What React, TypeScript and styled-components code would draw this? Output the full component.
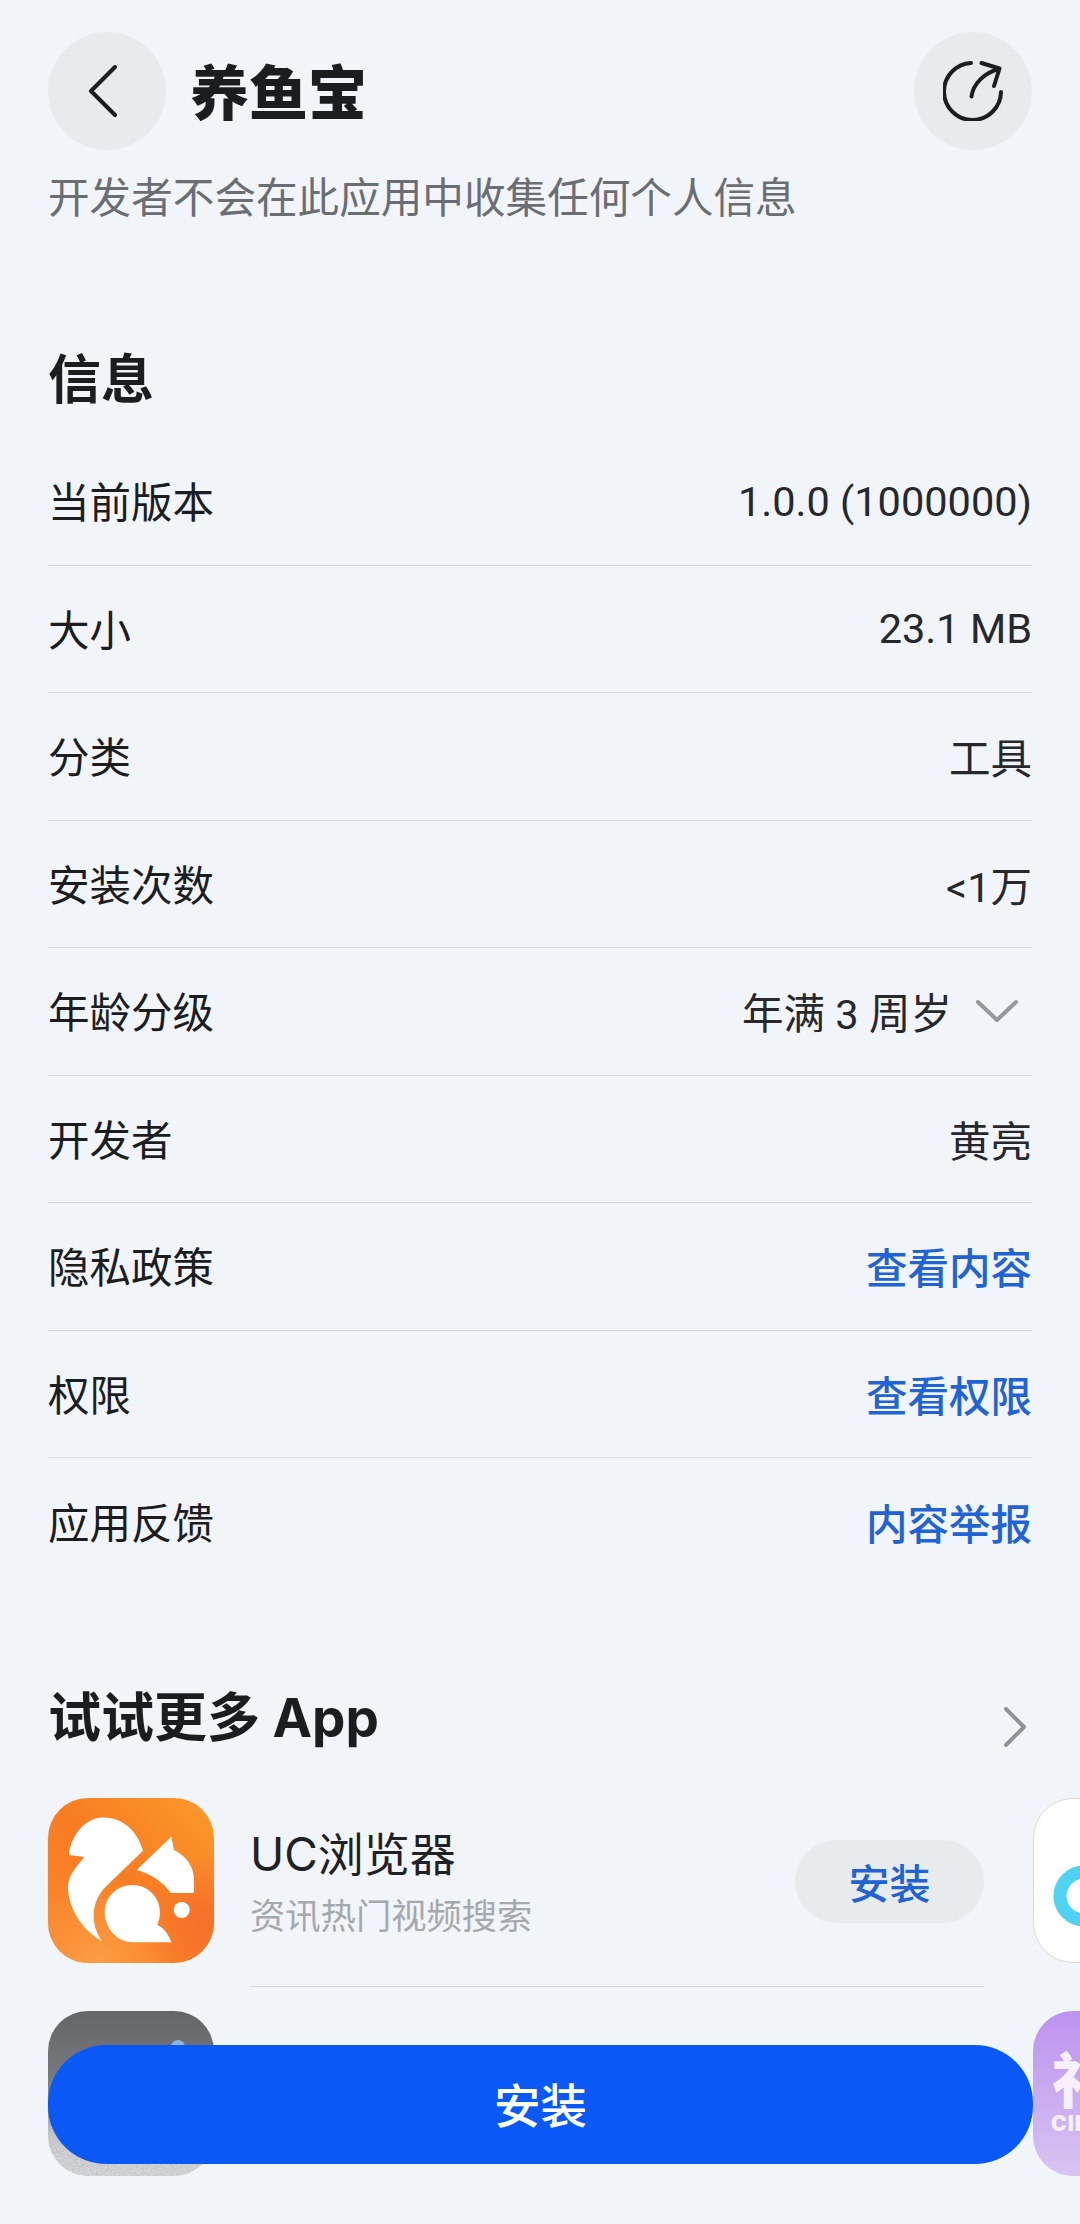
import React from 'react'
import styled, { createGlobalStyle } from 'styled-components'

const infoRows = [
  { label: '当前版本', value: '1.0.0 (1000000)' },
  { label: '大小', value: '23.1 MB' },
  { label: '分类', value: '工具' },
  { label: '安装次数', value: '<1万' },
  { label: '年龄分级', value: '年满 3 周岁', expandable: true },
  { label: '开发者', value: '黄亮' },
  { label: '隐私政策', value: '查看内容', link: true },
  { label: '权限', value: '查看权限', link: true },
  { label: '应用反馈', value: '内容举报', link: true },
]

const GlobalStyle = createGlobalStyle`
  html, body {
    margin: 0;
    padding: 0;
    background: #f1f4f9;
  }
  body {
    font-family: "Inter", "Noto Sans CJK SC", sans-serif;
  }
`

const Page = styled.div`
  position: relative;
  width: 1080px;
  height: 2224px;
  overflow: hidden;
  background: #f1f4f9;
  color: #1c1d1f;
`

const Header = styled.header`
  display: flex;
  align-items: center;
  justify-content: space-between;
  padding: 32px 48px 0;
`

const HeaderLeft = styled.div`
  display: flex;
  align-items: center;
  gap: 24px;
`

const RoundButton = styled.div`
  display: flex;
  align-items: center;
  justify-content: center;
  width: 118px;
  height: 118px;
  border-radius: 50%;
  background: #e8ebee;
`

const Title = styled.h1`
  margin: 5px 0 0;
  font-size: 59px;
  line-height: 70px;
  font-weight: 900;
`

const Subtitle = styled.p`
  margin: 23px 48px 0;
  font-size: 41.6px;
  line-height: 50px;
  color: #6a6e73;
`

const SectionTitle = styled.h2`
  margin: 0;
  font-size: 53px;
  line-height: 60px;
  font-weight: 700;
`

const Section = styled.section<{ $top: number }>`
  margin-top: ${(p) => p.$top}px;
  padding: 0 48px;
`

const InfoList = styled.div`
  margin-top: 28px;
`

const InfoRow = styled.div`
  display: flex;
  align-items: center;
  justify-content: space-between;
  height: 127.5px;
  box-sizing: border-box;
  padding-bottom: 2px;
  font-size: 41.5px;
  border-bottom: 1.5px solid #d9dcdf;
  &:last-child {
    border-bottom: none;
  }
`

const InfoValue = styled.span<{ $link?: boolean }>`
  display: flex;
  align-items: center;
  gap: 24px;
  padding-top: 2px;
  font-family: "Roboto", "Noto Sans CJK SC", sans-serif;
  font-size: 41.5px;
  color: ${(p) => (p.$link ? '#1f63d4' : '#26282b')};
  font-weight: ${(p) => (p.$link ? 500 : 400)};
`

const MoreHeader = styled.div`
  display: flex;
  align-items: center;
  justify-content: space-between;
  padding-right: 6px;
  svg {
    margin-top: 18px;
  }
`

const Carousel = styled.div`
  display: flex;
  gap: 49px;
  margin-top: 50px;
  padding-left: 48px;
`

const Column = styled.div`
  flex: none;
  width: 936px;
  display: flex;
  flex-direction: column;
  gap: 24px;
`

const AppItem = styled.div`
  display: flex;
  gap: 36px;
  min-height: 189px;
`

const IconTile = styled.div`
  flex: none;
  width: 166px;
  height: 165px;
  border-radius: 40px;
  overflow: hidden;
  svg {
    display: block;
  }
`

const AppBody = styled.div`
  flex: 1;
  display: flex;
  align-items: center;
  justify-content: space-between;
  height: 189px;
  box-sizing: border-box;
  padding-bottom: 24px;
  border-bottom: 1.5px solid #d9dcdf;
`

const AppText = styled.div`
  padding-top: 6px;
`

const AppName = styled.div`
  font-size: 46px;
  line-height: 58px;
  color: #1f2124;
`

const AppDesc = styled.div`
  font-size: 35.3px;
  line-height: 46px;
  margin-top: 11px;
  color: #a5a9ae;
`

const GetButton = styled.div`
  display: flex;
  align-items: center;
  justify-content: center;
  width: 189px;
  height: 83px;
  margin-top: 3px;
  border-radius: 42px;
  background: #e8ebee;
  color: #1f63d4;
  font-size: 41px;
  font-weight: 500;
`

const WhiteTile = styled(IconTile)`
  width: 200px;
  background: #fff;
  box-sizing: border-box;
  border: 1.5px solid #d8dadd;
`

const PurpleTile = styled(IconTile)`
  width: 200px;
  display: flex;
  flex-direction: column;
  align-items: flex-start;
  padding-left: 18px;
  box-sizing: border-box;
  background: linear-gradient(180deg, #bc92ef 0%, #d8c4f1 100%);
  color: #f6effc;
  font-weight: 900;
`

const TileGlyph = styled.span`
  font-size: 60px;
  line-height: 60px;
  margin-top: 40px;
`

const TileCaption = styled.span`
  font-family: "Inter", sans-serif;
  font-size: 21px;
  line-height: 25px;
  letter-spacing: 1px;
`

const InstallBar = styled.button`
  position: absolute;
  left: 48px;
  top: 2045px;
  width: 985px;
  height: 119px;
  padding: 0 0 5px;
  border: none;
  border-radius: 58px;
  background: #0a59f7;
  color: #fff;
  font-family: inherit;
  font-size: 46.5px;
  font-weight: 500;
`

const BackIcon = () => (
  <svg width="30" height="52" viewBox="0 0 30 52" fill="none" style={{ marginLeft: -8 }}>
    <path d="M27 2 L3 26 L27 50" stroke="#1c1d1f" strokeWidth="4" strokeLinecap="round" strokeLinejoin="round" />
  </svg>
)

const ShareIcon = () => (
  <svg width="60" height="60" viewBox="0 0 60 60" fill="none">
    <path d="M28 2 A28.5 28.5 0 1 0 58 31" stroke="#1c1d1f" strokeWidth="4" strokeLinecap="round" />
    <path d="M28.5 35.5 C30 23 41 12 55.5 8" stroke="#1c1d1f" strokeWidth="4" strokeLinecap="round" />
    <path d="M38.5 2 L56.5 7.5 L51 25" stroke="#1c1d1f" strokeWidth="4" strokeLinecap="round" strokeLinejoin="round" />
  </svg>
)

const ChevronDown = () => (
  <svg width="42" height="24" viewBox="0 0 42 24" fill="none" style={{ marginRight: 14 }}>
    <path d="M2 3 L21 21 L40 3" stroke="#95989c" strokeWidth="4" strokeLinecap="round" strokeLinejoin="round" />
  </svg>
)

const ChevronRight = () => (
  <svg width="22" height="40" viewBox="0 0 22 40" fill="none">
    <path d="M2 2 L20 20 L2 38" stroke="#8f9296" strokeWidth="4" strokeLinecap="round" strokeLinejoin="round" />
  </svg>
)

const UcLogo = () => (
  <svg width="166" height="165" viewBox="0 0 166 165">
    <defs>
      <linearGradient id="ucBase" x1="1" y1="0" x2="0" y2="1">
        <stop offset="0" stopColor="#fb9a2a" />
        <stop offset="0.5" stopColor="#f87d22" />
        <stop offset="1" stopColor="#f9852c" />
      </linearGradient>
      <radialGradient id="ucGlow" cx="0.3" cy="1" r="0.55">
        <stop offset="0" stopColor="#fd9f45" stopOpacity="0.9" />
        <stop offset="1" stopColor="#fd9f45" stopOpacity="0" />
      </radialGradient>
      <radialGradient id="ucDeep" cx="0.95" cy="0.75" r="0.4">
        <stop offset="0" stopColor="#f5702b" />
        <stop offset="1" stopColor="#f5702b" stopOpacity="0" />
      </radialGradient>
    </defs>
    <rect width="166" height="165" fill="url(#ucBase)" />
    <rect width="166" height="165" fill="url(#ucGlow)" />
    <rect width="166" height="165" fill="url(#ucDeep)" />
    <g fill="#fff">
      <path d="M21 57 C22 40 36 20 54 19.5 C74 19 89 32 95 52.7 L57.7 88.7 C44 102 41 125 54.3 143.7 C36 133 22 114 20 92 C19 77 30 68 36 59 Z" />
      <path d="M88.7 72 L123.3 38.7 L126 52 C138 58 146 68 146 82 L146 95 L122.7 95 C116 85 104 76 88.7 72 Z" />
      <path d="M84.3 87 C99.5 87 112 99 112 114.3 C112 118.5 111 123 109.3 127 C115 129 120 135 123.3 144.3 L84.3 144.3 C69 144.3 56.7 130 56.7 114.3 C56.7 99 69 87 84.3 87 Z" />
      <circle cx="133.7" cy="112" r="8" />
    </g>
  </svg>
)

const GreyTile = () => (
  <svg width="166" height="165" viewBox="0 0 166 165">
    <defs>
      <linearGradient id="greyBase" x1="0" y1="0" x2="0" y2="1">
        <stop offset="0" stopColor="#646567" />
        <stop offset="0.4" stopColor="#787a7d" />
        <stop offset="0.62" stopColor="#9a9b9e" />
        <stop offset="0.74" stopColor="#bbbcbf" />
        <stop offset="1" stopColor="#c6c7ca" />
      </linearGradient>
      <linearGradient id="speckleFade" x1="0" y1="0" x2="0" y2="1">
        <stop offset="0.6" stopColor="#000" />
        <stop offset="0.8" stopColor="#fff" />
      </linearGradient>
      <mask id="speckleMask">
        <rect width="166" height="165" fill="url(#speckleFade)" />
      </mask>
      <filter id="speckle">
        <feTurbulence type="fractalNoise" baseFrequency="0.7" numOctaves="2" />
        <feColorMatrix values="0 0 0 0 1  0 0 0 0 1  0 0 0 0 1  1.6 0 0 0 -0.5" />
      </filter>
    </defs>
    <rect width="166" height="165" fill="url(#greyBase)" />
    <rect width="166" height="165" filter="url(#speckle)" mask="url(#speckleMask)" opacity="0.6" />
    <circle cx="130" cy="36" r="7" fill="#8fb4e6" />
  </svg>
)

const RingMark = () => (
  <svg width="200" height="165" viewBox="0 0 200 165">
    <circle cx="50" cy="97" r="24" fill="none" stroke="#4fd3f5" strokeWidth="13" />
  </svg>
)

export default function App() {
  return (
    <Page>
      <GlobalStyle />
      <Header>
        <HeaderLeft>
          <RoundButton>
            <BackIcon />
          </RoundButton>
          <Title>养鱼宝</Title>
        </HeaderLeft>
        <RoundButton>
          <ShareIcon />
        </RoundButton>
      </Header>
      <Subtitle>开发者不会在此应用中收集任何个人信息</Subtitle>

      <Section $top={127}>
        <SectionTitle>信息</SectionTitle>
        <InfoList>
          {infoRows.map((row) => (
            <InfoRow key={row.label}>
              <span>{row.label}</span>
              <InfoValue $link={row.link}>
                {row.value}
                {row.expandable && <ChevronDown />}
              </InfoValue>
            </InfoRow>
          ))}
        </InfoList>
      </Section>

      <Section $top={102}>
        <MoreHeader>
          <SectionTitle>试试更多 App</SectionTitle>
          <ChevronRight />
        </MoreHeader>
      </Section>

      <Carousel>
        <Column>
          <AppItem>
            <IconTile>
              <UcLogo />
            </IconTile>
            <AppBody>
              <AppText>
                <AppName>UC浏览器</AppName>
                <AppDesc>资讯热门视频搜索</AppDesc>
              </AppText>
              <GetButton>安装</GetButton>
            </AppBody>
          </AppItem>
          <AppItem>
            <IconTile>
              <GreyTile />
            </IconTile>
          </AppItem>
        </Column>
        <Column>
          <AppItem>
            <WhiteTile>
              <RingMark />
            </WhiteTile>
          </AppItem>
          <AppItem>
            <PurpleTile>
              <TileGlyph>祁</TileGlyph>
              <TileCaption>CIRCLE</TileCaption>
            </PurpleTile>
          </AppItem>
        </Column>
      </Carousel>

      <InstallBar>安装</InstallBar>
    </Page>
  )
}
